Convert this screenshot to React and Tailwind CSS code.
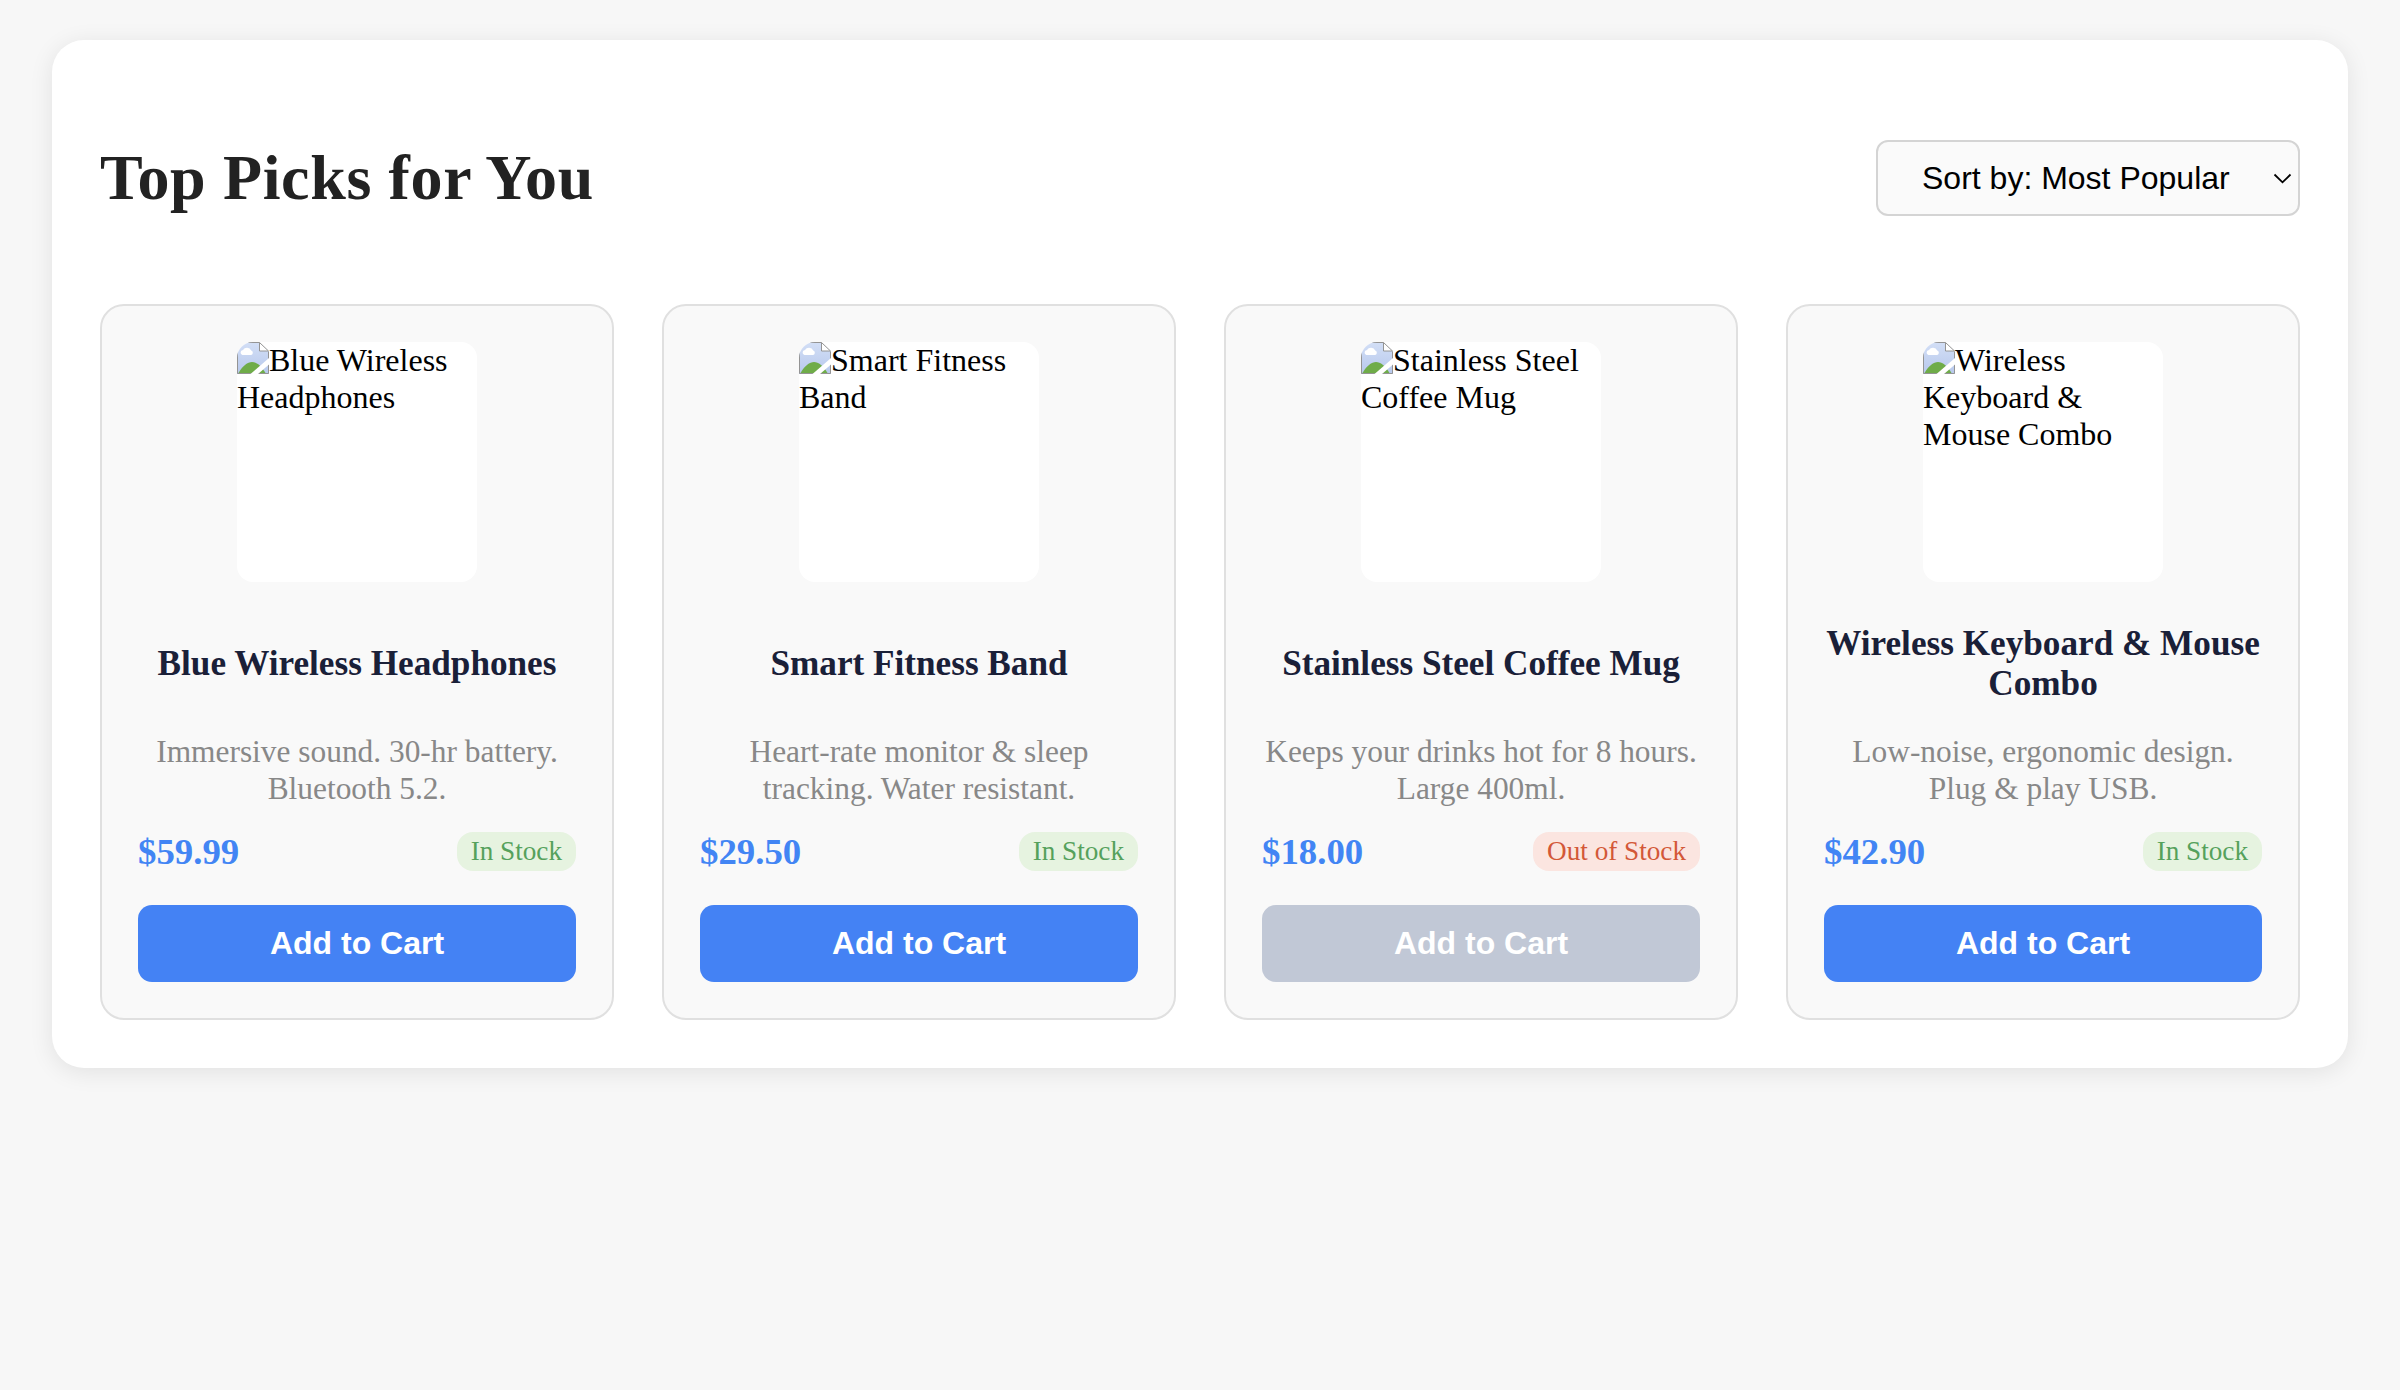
const products = [
  {
    name: "Blue Wireless Headphones",
    description: "Immersive sound. 30-hr battery. Bluetooth 5.2.",
    price: "$59.99",
    inStock: true,
  },
  {
    name: "Smart Fitness Band",
    description: "Heart-rate monitor & sleep tracking. Water resistant.",
    price: "$29.50",
    inStock: true,
  },
  {
    name: "Stainless Steel Coffee Mug",
    description: "Keeps your drinks hot for 8 hours. Large 400ml.",
    price: "$18.00",
    inStock: false,
  },
  {
    name: "Wireless Keyboard & Mouse Combo",
    description: "Low-noise, ergonomic design. Plug & play USB.",
    price: "$42.90",
    inStock: true,
  },
];

function MissingPictureIcon() {
  return (
    <svg className="float-left block h-8 w-8" viewBox="0 0 32 32" aria-hidden="true">
      <defs>
        <linearGradient id="sky" x1="0" y1="0" x2="0" y2="1">
          <stop offset="0" stopColor="#d3dff6" />
          <stop offset="1" stopColor="#b7c8ec" />
        </linearGradient>
      </defs>
      <path d="M0 0H22L32 10V32H0Z" fill="url(#sky)" />
      <path d="M5.5 13a2.6 2.6 0 0 1 .5-5.1A4.6 4.6 0 0 1 14.2 8.6A2.3 2.3 0 0 1 14.2 13Z" fill="#fff" />
      <path d="M1.5 31C6 23.500 10.500 20 15 20S24 23.500 28.500 31Z" fill="#6fac49" />
      <path d="M.5 0V31.500H31.500V9.500" fill="none" stroke="#949494" />
      <path d="M0 .5H22.500" fill="none" stroke="#949494" />
      <path d="M22.500 .5V9H31.500Z" fill="#fff" stroke="#949494" />
      <path d="M32 16V22.500L21 32H13.500Z" fill="#fff" />
    </svg>
  );
}

function ProductCard({ product }) {
  const { name, description, price, inStock } = product;
  return (
    <article className="flex flex-col items-center rounded-3xl border-2 border-[#e0e0e0] bg-[#f9f9f9] p-9">
      <div className="h-60 w-60 overflow-hidden rounded-2xl bg-white text-[32px] leading-[37px] text-black">
        <MissingPictureIcon />
        {name}
      </div>
      <h3 className="mt-[42px] flex h-20 items-center text-center text-[35.2px] leading-10 font-bold text-[#1a2038]">
        {name}
      </h3>
      <p className="mt-[29px] text-center text-[31.4px] leading-[37px] text-[#888]">{description}</p>
      <div className="mt-[23px] flex h-[43px] w-full items-center justify-between">
        <span className="text-[36.8px] leading-[41px] font-bold text-[#4285f4]">{price}</span>
        <span
          className={
            inStock
              ? "rounded-2xl bg-[#e6f3e0] px-3.5 py-1 text-[27.2px] leading-[31px] text-[#55a15c]"
              : "rounded-2xl bg-[#fbe5e0] px-3.5 py-1 text-[27.2px] leading-[31px] text-[#d35838]"
          }
        >
          {inStock ? "In Stock" : "Out of Stock"}
        </span>
      </div>
      <button
        disabled={!inStock}
        className="mt-8 h-[77px] w-full rounded-[14px] bg-[#4482f4] pb-0.5 font-['Liberation_Sans',Arial,sans-serif] text-[32px] leading-9 font-bold text-white disabled:bg-[#c1c8d6]"
      >
        Add to Cart
      </button>
    </article>
  );
}

export default function App() {
  return (
    <div className="min-h-[1390px] bg-[#f7f7f7] px-[52px] py-10 font-['Liberation_Serif','Times_New_Roman',serif]">
      <main className="rounded-[32px] bg-white p-12 pt-[100px] shadow-[0_4px_24px_rgba(0,0,0,0.09)]">
        <header className="flex h-[76px] items-center justify-between">
          <h2 className="text-[64px] leading-[74px] font-bold tracking-[0.64px] text-[#222]">Top Picks for You</h2>
          <div className="relative">
            <select className="h-[76px] w-[424px] appearance-none rounded-xl border-2 border-[#d4d4d4] bg-[#fafafa] pl-11 font-['Liberation_Sans',Arial,sans-serif] text-[32px] text-black">
              <option>Sort by: Most Popular</option>
            </select>
            <svg
              className="pointer-events-none absolute top-[33px] right-2 h-[11px] w-[19px]"
              viewBox="0 0 19 11"
              fill="none"
              stroke="#000"
              strokeWidth="1.8"
            >
              <path d="M1.500 1.500L9.500 9.300L17.500 1.500" />
            </svg>
          </div>
        </header>
        <section className="mt-[88px] grid grid-cols-4 gap-12">
          {products.map((product) => (
            <ProductCard key={product.name} product={product} />
          ))}
        </section>
      </main>
    </div>
  );
}
